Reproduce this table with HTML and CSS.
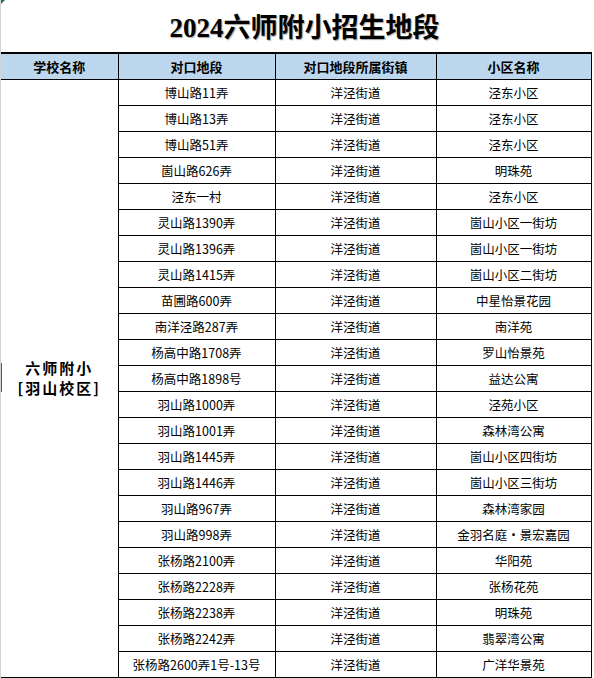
FILE: index.html
```html
<!DOCTYPE html>
<html lang="zh">
<head>
<meta charset="utf-8">
<link rel="stylesheet" href="styles.css">
</head>
<body>
<div class="sheet">
  <span class="corner"></span>
  <span class="rowmark"></span>
  <h1 class="title">2024六师附小招生地段</h1>
  <table class="grid">
    <colgroup>
      <col class="c1"><col class="c2"><col class="c3"><col class="c4">
    </colgroup>
    <thead>
      <tr><th>学校名称</th><th>对口地段</th><th>对口地段所属街镇</th><th>小区名称</th></tr>
    </thead>
    <tbody>
      <tr><td class="school" rowspan="23"><div class="sname">六师附小</div><div class="sname">[羽山校区]</div></td><td>博山路11弄</td><td>洋泾街道</td><td>泾东小区</td></tr>
      <tr><td>博山路13弄</td><td>洋泾街道</td><td>泾东小区</td></tr>
      <tr><td>博山路51弄</td><td>洋泾街道</td><td>泾东小区</td></tr>
      <tr><td>崮山路626弄</td><td>洋泾街道</td><td>明珠苑</td></tr>
      <tr><td>泾东一村</td><td>洋泾街道</td><td>泾东小区</td></tr>
      <tr><td>灵山路1390弄</td><td>洋泾街道</td><td>崮山小区一街坊</td></tr>
      <tr><td>灵山路1396弄</td><td>洋泾街道</td><td>崮山小区一街坊</td></tr>
      <tr><td>灵山路1415弄</td><td>洋泾街道</td><td>崮山小区二街坊</td></tr>
      <tr><td>苗圃路600弄</td><td>洋泾街道</td><td>中星怡景花园</td></tr>
      <tr><td>南洋泾路287弄</td><td>洋泾街道</td><td>南洋苑</td></tr>
      <tr><td>杨高中路1708弄</td><td>洋泾街道</td><td>罗山怡景苑</td></tr>
      <tr><td>杨高中路1898号</td><td>洋泾街道</td><td>益达公寓</td></tr>
      <tr><td>羽山路1000弄</td><td>洋泾街道</td><td>泾苑小区</td></tr>
      <tr><td>羽山路1001弄</td><td>洋泾街道</td><td>森林湾公寓</td></tr>
      <tr><td>羽山路1445弄</td><td>洋泾街道</td><td>崮山小区四街坊</td></tr>
      <tr><td>羽山路1446弄</td><td>洋泾街道</td><td>崮山小区三街坊</td></tr>
      <tr><td>羽山路967弄</td><td>洋泾街道</td><td>森林湾家园</td></tr>
      <tr><td>羽山路998弄</td><td>洋泾街道</td><td>金羽名庭·景宏嘉园</td></tr>
      <tr><td>张杨路2100弄</td><td>洋泾街道</td><td>华阳苑</td></tr>
      <tr><td>张杨路2228弄</td><td>洋泾街道</td><td>张杨花苑</td></tr>
      <tr><td>张杨路2238弄</td><td>洋泾街道</td><td>明珠苑</td></tr>
      <tr><td>张杨路2242弄</td><td>洋泾街道</td><td>翡翠湾公寓</td></tr>
      <tr><td>张杨路2600弄1号-13号</td><td>洋泾街道</td><td>广洋华景苑</td></tr>
    </tbody>
  </table>
</div>
</body>
</html>
```
FILE: styles.css
```css
html, body {
  margin: 0;
  padding: 0;
  background: #fff;
}
.sheet {
  position: relative;
  width: 593px;
  height: 678px;
  border-left: 1px solid #d4d4d4;
  overflow: hidden;
}
.corner {
  position: absolute;
  left: 0;
  top: 0;
  width: 0;
  height: 0;
  border-top: 4px solid #217346;
  border-right: 4px solid transparent;
}
.rowmark {
  position: absolute;
  left: -1px;
  top: 363px;
  width: 2px;
  height: 29px;
  background: #217346;
}
.title {
  margin: 0;
  height: 52px;
  box-sizing: border-box;
  padding: 11px 0 0 14px;
  text-align: center;
  font-family: "Liberation Serif", "Noto Sans CJK SC", serif;
  font-size: 27px;
  line-height: 34px;
  font-weight: bold;
  color: #000;
  text-shadow: 1px 1px 1px rgba(0,0,0,0.35);
}
.grid {
  border-collapse: collapse;
  table-layout: fixed;
  width: 590px;
  font-family: "Noto Sans CJK SC", sans-serif;
  color: #000;
}
.c1 { width: 117px; }
.c2 { width: 157px; }
.c3 { width: 161px; }
.c4 { width: 155px; }
.grid th {
  background: #bdd7ee;
  font-size: 13px;
  font-weight: bold;
  height: 25px;
  padding: 0;
  border-top: 2px solid #000;
  border-left: 1px solid #000;
  border-right: 1px solid #000;
  border-bottom: 1px solid #000;
  line-height: 25px;
}
.grid th:first-child { border-left: none; }
.grid td {
  font-size: 12.5px;
  height: 25px;
  padding: 0;
  text-align: center;
  border: 1px solid #000;
  line-height: 25px;
  white-space: nowrap;
}
.grid tbody tr:last-child td { border-bottom: 2px solid #000; }
.grid td.school {
  border-left: none;
  border-bottom: 2px solid #000;
  vertical-align: middle;
  padding-bottom: 2px;
}
.sname {
  font-size: 15px;
  font-weight: bold;
  line-height: 20px;
  letter-spacing: 2px;
}
```
